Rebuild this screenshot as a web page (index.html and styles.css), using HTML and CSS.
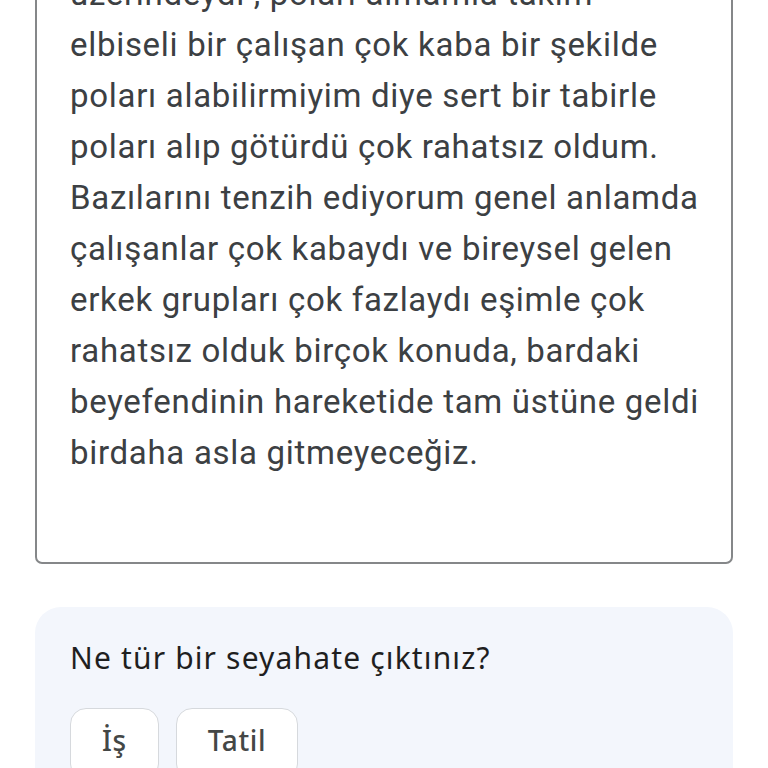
FILE: index.html
```html
<!DOCTYPE html>
<html lang="tr">
<head>
    <meta charset="UTF-8">
    <meta name="viewport" content="width=device-width, initial-scale=1.0">
    <title>Yorum</title>
    <link rel="stylesheet" href="styles.css">
</head>
<body>

    <div class="page">
        <!-- yorum metni -->
        <div class="review-box">
            <p class="review-text">üzerindeydi , poları almamla takım<br>
                elbiseli bir çalışan çok kaba bir şekilde<br>
                poları alabilirmiyim diye sert bir tabirle<br>
                poları alıp götürdü çok rahatsız oldum.<br>
                Bazılarını tenzih ediyorum genel anlamda<br>
                çalışanlar çok kabaydı ve bireysel gelen<br>
                erkek grupları çok fazlaydı eşimle çok<br>
                rahatsız olduk birçok konuda, bardaki<br>
                beyefendinin hareketide tam üstüne geldi<br>
                birdaha asla gitmeyeceğiz.</p>
        </div>

        <div class="trip-card">
            <h3 class="trip-title">Ne tür bir seyahate çıktınız?</h3>
            <div class="chips">
                <button class="chip">İş</button>
                <button class="chip">Tatil</button>
            </div>
        </div>
    </div>

</body>
</html>
```

FILE: styles.css
```css
body {
    margin: 0;
    padding: 0;
    background: #ffffff;
    font-family: Roboto, "Noto Sans", Arial, sans-serif;
    overflow: hidden;
}

.page {
    padding: 0 35px;
}

.review-box {
    margin-top: -50px;
    border: 2px solid #858789;
    border-radius: 7px;
    padding: 16px 10px 84px 33px;
}

.review-text {
    margin: 0;
    font-size: 33px;
    line-height: 51px;
    letter-spacing: 0.7px;
    white-space: nowrap;
    color: #3c4043;
}

.trip-card {
    margin-top: 43px;
    background: #f3f6fc;
    border-radius: 26px;
    padding: 30px 35px 80px 35px;
}

.trip-title {
    margin: 0;
    font-family: "Noto Sans", Roboto, sans-serif;
    font-weight: normal;
    font-size: 30px;
    line-height: 42px;
    letter-spacing: 1.15px;
    color: #1f1f1f;
}

.chips {
    display: flex;
    gap: 17px;
    margin-top: 29px;
}

.chip {
    background: #ffffff;
    border: 1.5px solid #d6d9dd;
    border-radius: 16px;
    padding: 12px 31px 20px 31px;
    font-family: "Noto Sans", Roboto, sans-serif;
    font-weight: 500;
    font-size: 28px;
    letter-spacing: 0.6px;
    color: #444746;
}
```
